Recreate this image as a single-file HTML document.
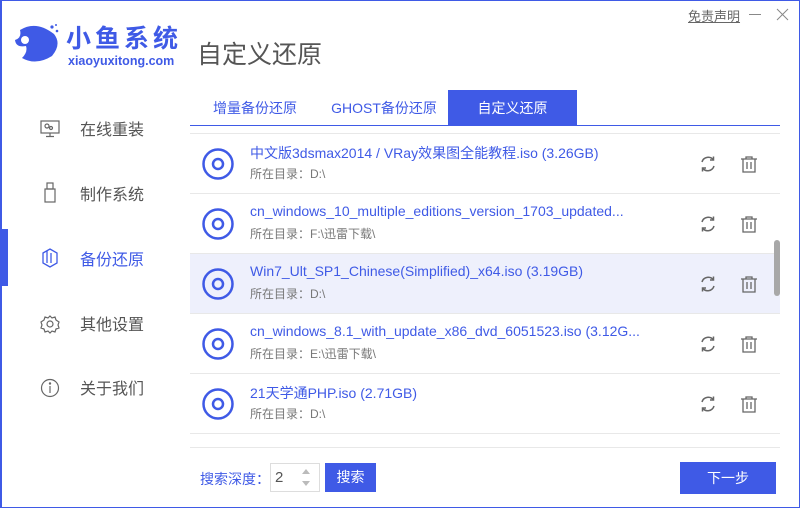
<!DOCTYPE html>
<html><head><meta charset="utf-8"><style>
*{margin:0;padding:0;box-sizing:border-box}
body{width:800px;height:508px;overflow:hidden;background:#fff;font-family:"Liberation Sans","Noto Sans CJK SC",sans-serif;position:relative}
.frame{position:absolute;inset:0;border:1px solid #3f5ae6;border-left:2px solid #3f5ae6;pointer-events:none;z-index:9}
.abs{position:absolute}
.nav{position:absolute;left:80px;font-size:16px;color:#555}
.ic{position:absolute;left:40px}
.tab{position:absolute;top:90px;height:35px;line-height:37px;font-size:14px;color:#3f5ae6;text-align:center}
.row{position:absolute;left:190px;width:590px;height:60px;border-bottom:1px solid #e8e8e8}
.row .t{position:absolute;left:60px;top:9px;font-size:14px;color:#3f5ae6;white-space:nowrap}
.row .s{position:absolute;left:60px;top:31px;font-size:12px;color:#777}
.row svg.disc{position:absolute;left:12px;top:14px}
.row svg.r{position:absolute;left:509px;top:21px}
.row svg.d{position:absolute;left:550px;top:21px}
</style></head><body>
<div class="frame"></div>
<svg class="abs" style="left:12px;top:22px" width="50" height="42" viewBox="0 0 50 42">
<path d="M8 8 Q24 -2 42 12 Q50 22 40 34 Q24 44 10 36 Q16 30 14 24 Q4 26 3 18 Q10 16 8 8Z" fill="#3f5ae6"/>
<circle cx="13" cy="18" r="4" fill="#fff"/><circle cx="40" cy="5" r="1.6" fill="#3f5ae6"/><circle cx="45" cy="9" r="1.3" fill="#3f5ae6"/><circle cx="44" cy="3" r="1" fill="#3f5ae6"/>
</svg>
<div class="abs" style="left:66px;top:24px;font-size:25px;font-weight:bold;color:#3f5ae6;letter-spacing:4px;line-height:30px">小鱼系统</div>
<div class="abs" style="left:68px;top:54px;font-size:12.5px;font-weight:bold;color:#3f5ae6">xiaoyuxitong.com</div>
<div class="abs" style="left:0;top:229px;width:8px;height:57px;background:#3f5ae6"></div>
<svg class="ic" style="top:120px" width="20" height="18" viewBox="0 0 20 18" fill="none" stroke="#666" stroke-width="1.2"><rect x="1" y="1" width="18" height="12"/><circle cx="7" cy="6" r="2"/><circle cx="11" cy="8" r="1.5"/><path d="M10 13v3M6 16.5h8"/></svg>
<div class="nav" style="top:116px">在线重装</div>
<svg class="ic" style="top:182px" width="20" height="22" viewBox="0 0 20 22" fill="none" stroke="#666" stroke-width="1.2"><rect x="7" y="1" width="6" height="6"/><rect x="5" y="7" width="10" height="13"/></svg>
<div class="nav" style="top:181px">制作系统</div>
<svg class="ic" style="top:247px" width="20" height="22" viewBox="0 0 20 22" fill="none" stroke="#3f5ae6" stroke-width="1.3"><path d="M3 6l7-4 7 4v10l-7 4-7-4z"/><path d="M7 4v12M11 6v10"/></svg>
<div class="nav" style="top:246px;color:#3f5ae6">备份还原</div>
<svg class="ic" style="top:314px" width="20" height="20" viewBox="0 0 20 20" fill="none" stroke="#666" stroke-width="1.2"><path d="M10 2l2 2 3-1 1 3 3 2-1 3 1 3-3 1-1 3-3-1-2 2-2-2-3 1-1-3-3-1 1-3-1-3 3-2 1-3 3 1z"/><circle cx="10" cy="10" r="3"/></svg>
<div class="nav" style="top:311px">其他设置</div>
<svg class="ic" style="top:378px" width="20" height="20" viewBox="0 0 20 20" fill="none" stroke="#666" stroke-width="1.2"><circle cx="10" cy="10" r="8.5"/><path d="M10 8v7"/><circle cx="10" cy="5.5" r=".6" fill="#666"/></svg>
<div class="nav" style="top:375px">关于我们</div>
<div class="abs" style="left:197px;top:35px;font-size:25px;color:#555">自定义还原</div>
<div class="abs" style="left:688px;top:6px;font-size:13px;color:#666;text-decoration:underline">免责声明</div>
<div class="abs" style="left:749px;top:14px;width:12px;height:1px;background:#888"></div>
<svg class="abs" style="left:776px;top:8px" width="13" height="13"><path d="M1 1l11 11M12 1L1 12" stroke="#888" stroke-width="1"/></svg>
<div class="tab" style="left:200px;width:110px">增量备份还原</div>
<div class="tab" style="left:325px;width:118px">GHOST备份还原</div>
<div class="tab" style="left:448px;width:129px;background:#3f5ae6;color:#fff">自定义还原</div>
<div class="abs" style="left:190px;top:125px;width:590px;height:1px;background:#3f5ae6"></div>
<div class="abs" style="left:190px;top:133px;width:590px;height:1px;background:#e8e8e8"></div>
<div class="row" style="top:134px"><svg class="disc" width="32" height="32"><circle cx="16" cy="16" r="14.5" fill="none" stroke="#3f5ae6" stroke-width="2.5"/><circle cx="16" cy="16" r="5" fill="none" stroke="#3f5ae6" stroke-width="2.5"/></svg><div class="t">中文版3dsmax2014 / VRay效果图全能教程.iso (3.26GB)</div><div class="s">所在目录：D:\</div>
<svg class="r" width="18" height="18" viewBox="0 0 18 18" fill="none" stroke="#666" stroke-width="1.5"><path d="M3 7a6.5 6.5 0 0 1 11.5-2M15 11a6.5 6.5 0 0 1-11.5 2"/><path d="M14.5 1.5v3.5h-3.5M3.5 16.5v-3.5h3.5"/></svg>
<svg class="d" width="18" height="18" viewBox="0 0 18 18" fill="none" stroke="#666" stroke-width="1.3"><path d="M1 4h16M6 4V2h6v2M3 4v13h12V4M7 7v7M11 7v7"/></svg></div>
<div class="row" style="top:194px"><svg class="disc" width="32" height="32"><circle cx="16" cy="16" r="14.5" fill="none" stroke="#3f5ae6" stroke-width="2.5"/><circle cx="16" cy="16" r="5" fill="none" stroke="#3f5ae6" stroke-width="2.5"/></svg><div class="t">cn_windows_10_multiple_editions_version_1703_updated...</div><div class="s">所在目录：F:\迅雷下载\</div>
<svg class="r" width="18" height="18" viewBox="0 0 18 18" fill="none" stroke="#666" stroke-width="1.5"><path d="M3 7a6.5 6.5 0 0 1 11.5-2M15 11a6.5 6.5 0 0 1-11.5 2"/><path d="M14.5 1.5v3.5h-3.5M3.5 16.5v-3.5h3.5"/></svg>
<svg class="d" width="18" height="18" viewBox="0 0 18 18" fill="none" stroke="#666" stroke-width="1.3"><path d="M1 4h16M6 4V2h6v2M3 4v13h12V4M7 7v7M11 7v7"/></svg></div>
<div class="row" style="top:254px;background:#eef0fc"><svg class="disc" width="32" height="32"><circle cx="16" cy="16" r="14.5" fill="none" stroke="#3f5ae6" stroke-width="2.5"/><circle cx="16" cy="16" r="5" fill="none" stroke="#3f5ae6" stroke-width="2.5"/></svg><div class="t">Win7_Ult_SP1_Chinese(Simplified)_x64.iso (3.19GB)</div><div class="s">所在目录：D:\</div>
<svg class="r" width="18" height="18" viewBox="0 0 18 18" fill="none" stroke="#666" stroke-width="1.5"><path d="M3 7a6.5 6.5 0 0 1 11.5-2M15 11a6.5 6.5 0 0 1-11.5 2"/><path d="M14.5 1.5v3.5h-3.5M3.5 16.5v-3.5h3.5"/></svg>
<svg class="d" width="18" height="18" viewBox="0 0 18 18" fill="none" stroke="#666" stroke-width="1.3"><path d="M1 4h16M6 4V2h6v2M3 4v13h12V4M7 7v7M11 7v7"/></svg></div>
<div class="row" style="top:314px"><svg class="disc" width="32" height="32"><circle cx="16" cy="16" r="14.5" fill="none" stroke="#3f5ae6" stroke-width="2.5"/><circle cx="16" cy="16" r="5" fill="none" stroke="#3f5ae6" stroke-width="2.5"/></svg><div class="t">cn_windows_8.1_with_update_x86_dvd_6051523.iso (3.12G...</div><div class="s">所在目录：E:\迅雷下载\</div>
<svg class="r" width="18" height="18" viewBox="0 0 18 18" fill="none" stroke="#666" stroke-width="1.5"><path d="M3 7a6.5 6.5 0 0 1 11.5-2M15 11a6.5 6.5 0 0 1-11.5 2"/><path d="M14.5 1.5v3.5h-3.5M3.5 16.5v-3.5h3.5"/></svg>
<svg class="d" width="18" height="18" viewBox="0 0 18 18" fill="none" stroke="#666" stroke-width="1.3"><path d="M1 4h16M6 4V2h6v2M3 4v13h12V4M7 7v7M11 7v7"/></svg></div>
<div class="row" style="top:374px"><svg class="disc" width="32" height="32"><circle cx="16" cy="16" r="14.5" fill="none" stroke="#3f5ae6" stroke-width="2.5"/><circle cx="16" cy="16" r="5" fill="none" stroke="#3f5ae6" stroke-width="2.5"/></svg><div class="t">21天学通PHP.iso (2.71GB)</div><div class="s">所在目录：D:\</div>
<svg class="r" width="18" height="18" viewBox="0 0 18 18" fill="none" stroke="#666" stroke-width="1.5"><path d="M3 7a6.5 6.5 0 0 1 11.5-2M15 11a6.5 6.5 0 0 1-11.5 2"/><path d="M14.5 1.5v3.5h-3.5M3.5 16.5v-3.5h3.5"/></svg>
<svg class="d" width="18" height="18" viewBox="0 0 18 18" fill="none" stroke="#666" stroke-width="1.3"><path d="M1 4h16M6 4V2h6v2M3 4v13h12V4M7 7v7M11 7v7"/></svg></div>
<div class="abs" style="left:190px;top:447px;width:590px;height:1px;background:#e8e8e8"></div>
<div class="abs" style="left:774px;top:240px;width:6px;height:56px;border-radius:3px;background:#a8a8a8"></div>
<div class="abs" style="left:200px;top:469px;font-size:14px;color:#3f5ae6">搜索深度：</div>
<div class="abs" style="left:270px;top:463px;width:50px;height:29px;border:1px solid #ddd;font-size:15px;color:#555;padding:5px 0 0 4px">2</div>
<svg class="abs" style="left:300px;top:467px" width="12" height="22"><path d="M2 7l4-5 4 5z M2 14l4 5 4-5z" fill="#bbb"/></svg>
<div class="abs" style="left:325px;top:463px;width:51px;height:29px;background:#3f5ae6;color:#fff;font-size:14px;text-align:center;line-height:29px">搜索</div>
<div class="abs" style="left:680px;top:462px;width:96px;height:32px;background:#3f5ae6;color:#fff;font-size:14px;text-align:center;line-height:32px">下一步</div>
</body></html>
